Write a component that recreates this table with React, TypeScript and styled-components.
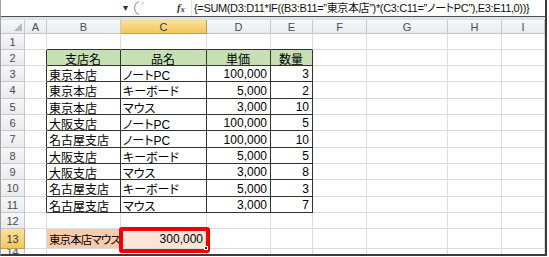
import React from 'react'
import styled, { createGlobalStyle, css } from 'styled-components'

const GlobalStyle = createGlobalStyle`
    html, body {
        margin: 0;
        padding: 0;
        background: #ffffff;
    }
`

const COLS = [24, 22, 74, 86, 64, 42, 54, 81, 54, 43]
const ROW_HEIGHTS = [14, 16, 16, 16, 17, 16, 16, 17, 16, 16, 17, 16, 16, 20, 6]
const LETTERS = ['A', 'B', 'C', 'D', 'E', 'F', 'G', 'H', 'I']

const DATA: [string, string, string, string][] = [
    ['東京本店', 'ノートPC', '100,000', '3'],
    ['東京本店', 'キーボード', '5,000', '2'],
    ['東京本店', 'マウス', '3,000', '10'],
    ['大阪支店', 'ノートPC', '100,000', '5'],
    ['名古屋支店', 'ノートPC', '100,000', '10'],
    ['大阪支店', 'キーボード', '5,000', '5'],
    ['大阪支店', 'マウス', '3,000', '8'],
    ['名古屋支店', 'キーボード', '5,000', '3'],
    ['名古屋支店', 'マウス', '3,000', '7'],
]

const FORMULA = '{=SUM(D3:D11*IF((B3:B11=”東京本店”)*(C3:C11=”ノートPC”),E3:E11,0))}'

type Fill = 'none' | 'green' | 'salmon' | 'peach'

interface CellSpec {
    text?: string
    align?: 'left' | 'right' | 'center'
    fill?: Fill
    selected?: boolean
    tight?: boolean
}

const fills: Record<Fill, string> = {
    none: '#ffffff',
    green: '#c6e0b4',
    salmon: '#f8cbad',
    peach: '#fce4d6',
}

// spreadsheet content, row 1..14, column A..I
const buildSheet = (): CellSpec[][] => {
    const rows: CellSpec[][] = []
    for (let r = 1; r <= 14; r++) {
        const row: CellSpec[] = LETTERS.map(() => ({}))
        if (r === 2) {
            ;['支店名', '品名', '単価', '数量'].forEach((t, i) => {
                row[i + 1] = { text: t, align: 'center', fill: 'green' }
            })
        }
        if (r >= 3 && r <= 11) {
            const [shop, item, price, qty] = DATA[r - 3]
            row[1] = { text: shop }
            row[2] = { text: item }
            row[3] = { text: price, align: 'right' }
            row[4] = { text: qty, align: 'right' }
        }
        if (r === 13) {
            row[1] = { text: '東京本店マウス', fill: 'salmon', tight: true }
            row[2] = { text: '300,000', align: 'right', fill: 'peach', selected: true }
        }
        rows.push(row)
    }
    return rows
}

const inTable = (r: number, c: number) => r >= 2 && r <= 11 && c >= 1 && c <= 4

export default function App() {
    const sheet = buildSheet()

    return (
        <>
            <GlobalStyle />
            <Frame>
                <FormulaBar>
                    <NameBox />
                    <DropArrow>▾</DropArrow>
                    <Grip>
                        <svg width="16" height="16" viewBox="0 0 16 16">
                            <path d="M6 1.5 A7 7 0 0 0 6 14.5" fill="none" stroke="#9aa3ad" strokeWidth="1.2" />
                            <path d="M8.5 4.5 A2.5 2.5 0 0 1 11 3" fill="none" stroke="#b8c0c8" strokeWidth="1" />
                        </svg>
                    </Grip>
                    <Fx>
                        f<sub>x</sub>
                    </Fx>
                    <FormulaInput>{FORMULA}</FormulaInput>
                </FormulaBar>
                <Gap />
                <Sheet $rows={ROW_HEIGHTS.map(h => `${h}px`).join(' ')}>
                    <Corner>
                        <svg width="8" height="8" viewBox="0 0 8 8">
                            <polygon points="8,0 8,8 0,8" fill="#b5b9be" />
                        </svg>
                    </Corner>
                    {LETTERS.map((l, i) => (
                        <ColHeader key={l} $active={i === 2}>{l}</ColHeader>
                    ))}
                    {sheet.map((row, ri) => {
                        const r = ri + 1
                        return (
                            <React.Fragment key={r}>
                                <RowHeader $active={r === 13}>{r}</RowHeader>
                                {row.map((cell, c) => {
                                    const darkRight = inTable(r, c) || inTable(r, c + 1)
                                    const darkBottom = inTable(r, c) || inTable(r + 1, c)
                                    return (
                                        <Cell
                                            key={c}
                                            $align={cell.align ?? 'left'}
                                            $fill={cell.fill ?? 'none'}
                                            $darkRight={darkRight}
                                            $darkBottom={darkBottom}
                                            $tight={!!cell.tight}
                                        >
                                            {cell.text}
                                            {cell.selected && (
                                                <>
                                                    <FillHandle />
                                                    <Highlight />
                                                </>
                                            )}
                                        </Cell>
                                    )
                                })}
                            </React.Fragment>
                        )
                    })}
                </Sheet>
            </Frame>
        </>
    )
}

const Frame = styled.div`
    width: 544px;
    height: 254px;
    border-left: 1px solid #a0a0a0;
    border-right: 2px solid #3c3c3c;
    border-bottom: 2px solid #3c3c3c;
    overflow: hidden;
    display: flex;
    flex-direction: column;
    background: #ffffff;
`

const FormulaBar = styled.div`
    display: flex;
    align-items: center;
    height: 16px;
    flex-shrink: 0;
    background: #ffffff;
    border-bottom: 1px solid #4a4f55;
`

const NameBox = styled.div`
    width: 122px;
    height: 100%;
`

const DropArrow = styled.span`
    width: 10px;
    font-family: 'DejaVu Sans', sans-serif;
    font-size: 10px;
    line-height: 1;
    color: #333333;
`

const Grip = styled.span`
    display: flex;
    width: 44px;
    height: 16px;
`

const Fx = styled.span`
    width: 14px;
    font-family: 'Liberation Serif', serif;
    font-style: italic;
    font-weight: 700;
    font-size: 11px;
    color: #333333;
    line-height: 1;

    sub {
        font-size: 8px;
        vertical-align: -1px;
    }
`

const FormulaInput = styled.div`
    flex: 1;
    height: 100%;
    padding-left: 2px;
    border-left: 1px solid #e2e4e7;
    font-family: 'Liberation Sans', 'Noto Sans CJK JP', sans-serif;
    font-feature-settings: 'palt';
    font-size: 11px;
    line-height: 16px;
    letter-spacing: -0.35px;
    white-space: nowrap;
    overflow: hidden;
    color: #111111;
`

const Gap = styled.div`
    height: 3px;
    flex-shrink: 0;
    background: #dfe3e8;
`

const Sheet = styled.div<{ $rows: string }>`
    display: grid;
    grid-template-columns: ${COLS.map(c => `${c}px`).join(' ')};
    grid-template-rows: ${p => p.$rows};
    font-family: 'Liberation Sans', 'Noto Sans CJK JP', sans-serif;
    font-feature-settings: 'palt';
    font-size: 12px;
    color: #000000;
`

const headerBase = css`
    display: flex;
    align-items: center;
    justify-content: center;
    box-sizing: border-box;
    border-right: 1px solid #c5c8cc;
    border-bottom: 1px solid #c5c8cc;
    background: linear-gradient(#f6f7f8, #e9ebee);
    font-family: 'Liberation Sans', sans-serif;
    font-size: 11px;
    color: #4c4c4c;
    overflow: hidden;
`

const activeHeader = css`
    background: linear-gradient(#fbe29a, #f3c65e);
    border-color: #c59b46;
    color: #3a3a3a;
`

const Corner = styled.div`
    ${headerBase};
    align-items: flex-end;
    justify-content: flex-end;
    padding: 0 2px 2px 0;
`

const ColHeader = styled.div<{ $active?: boolean }>`
    ${headerBase};
    ${p => p.$active && activeHeader};
`

const RowHeader = styled.div<{ $active?: boolean }>`
    ${headerBase};
    ${p => p.$active && activeHeader};
`

const Cell = styled.div<{
    $align: 'left' | 'right' | 'center'
    $fill: Fill
    $darkRight: boolean
    $darkBottom: boolean
    $tight: boolean
}>`
    position: relative;
    display: flex;
    align-items: center;
    justify-content: ${p => (p.$align === 'right' ? 'flex-end' : p.$align === 'center' ? 'center' : 'flex-start')};
    box-sizing: border-box;
    padding: 1px 3px 0 2px;
    background: ${p => fills[p.$fill]};
    border-right: 1px solid ${p => (p.$darkRight ? '#333333' : '#dadcdd')};
    border-bottom: 1px solid ${p => (p.$darkBottom ? '#333333' : '#dadcdd')};
    white-space: nowrap;
    font-size: ${p => (p.$tight ? '11.5px' : '12px')};
    letter-spacing: ${p => (p.$tight ? '-0.9px' : '0')};
    overflow: visible;
`

const FillHandle = styled.span`
    position: absolute;
    right: -2px;
    bottom: -2px;
    width: 4px;
    height: 4px;
    background: #202020;
    border: 1px solid #ffffff;
    box-sizing: border-box;
    z-index: 3;
`

const Highlight = styled.span`
    position: absolute;
    left: -2px;
    top: -2px;
    right: -4px;
    bottom: -5px;
    border: 4px solid #f00000;
    border-radius: 3px;
    box-sizing: border-box;
    pointer-events: none;
    z-index: 2;
`
